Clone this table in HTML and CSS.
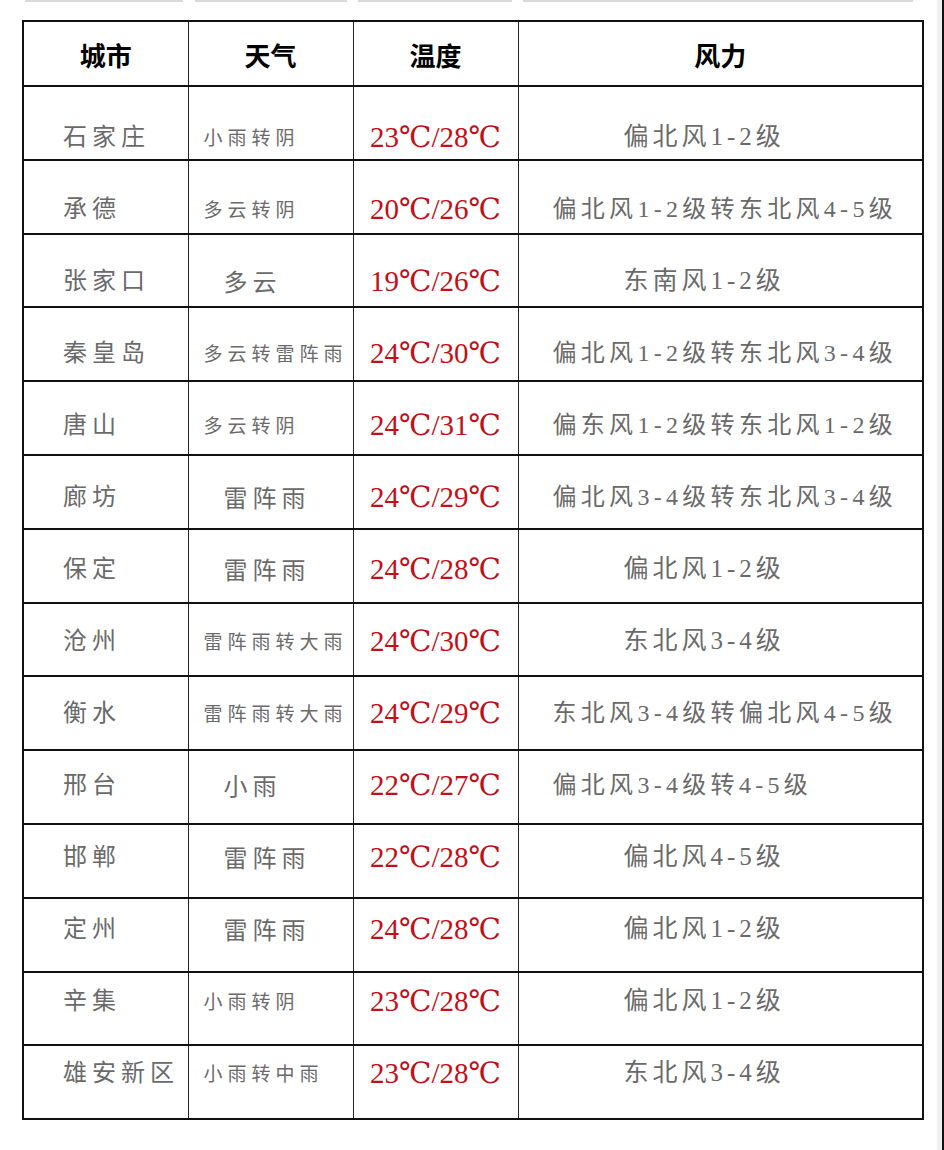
FILE: index.html
```html
<!DOCTYPE html>
<html lang="zh-CN">
<head>
<meta charset="utf-8">
<title>天气预报</title>
<link rel="stylesheet" href="styles.css">
</head>
<body>
<div class="page">
  <div class="main">
    <div class="topbars">
      <span class="bar b1"></span><span class="bar b2"></span><span class="bar b3"></span><span class="bar b4"></span>
    </div>
    <table class="weather">
      <colgroup>
        <col class="c-city"><col class="c-wx"><col class="c-temp"><col class="c-wind">
      </colgroup>
      <thead>
        <tr><th>城市</th><th>天气</th><th>温度</th><th>风力</th></tr>
      </thead>
      <tbody>
        <tr><td class="city">石家庄</td><td class="wx sm">小雨转阴</td><td class="temp">23℃/28℃</td><td class="wind sh">偏北风1-2级</td></tr>
        <tr><td class="city">承德</td><td class="wx sm">多云转阴</td><td class="temp">20℃/26℃</td><td class="wind lg">偏北风1-2级转东北风4-5级</td></tr>
        <tr><td class="city">张家口</td><td class="wx big">多云</td><td class="temp">19℃/26℃</td><td class="wind sh">东南风1-2级</td></tr>
        <tr><td class="city">秦皇岛</td><td class="wx sm">多云转雷阵雨</td><td class="temp">24℃/30℃</td><td class="wind lg">偏北风1-2级转东北风3-4级</td></tr>
        <tr><td class="city">唐山</td><td class="wx sm">多云转阴</td><td class="temp">24℃/31℃</td><td class="wind lg">偏东风1-2级转东北风1-2级</td></tr>
        <tr><td class="city">廊坊</td><td class="wx big">雷阵雨</td><td class="temp">24℃/29℃</td><td class="wind lg">偏北风3-4级转东北风3-4级</td></tr>
        <tr><td class="city">保定</td><td class="wx big">雷阵雨</td><td class="temp">24℃/28℃</td><td class="wind sh">偏北风1-2级</td></tr>
        <tr><td class="city">沧州</td><td class="wx sm">雷阵雨转大雨</td><td class="temp">24℃/30℃</td><td class="wind sh">东北风3-4级</td></tr>
        <tr><td class="city">衡水</td><td class="wx sm">雷阵雨转大雨</td><td class="temp">24℃/29℃</td><td class="wind lg">东北风3-4级转偏北风4-5级</td></tr>
        <tr><td class="city">邢台</td><td class="wx big">小雨</td><td class="temp">22℃/27℃</td><td class="wind lg">偏北风3-4级转4-5级</td></tr>
        <tr><td class="city">邯郸</td><td class="wx big">雷阵雨</td><td class="temp">22℃/28℃</td><td class="wind sh">偏北风4-5级</td></tr>
        <tr><td class="city">定州</td><td class="wx big">雷阵雨</td><td class="temp">24℃/28℃</td><td class="wind sh">偏北风1-2级</td></tr>
        <tr><td class="city">辛集</td><td class="wx sm">小雨转阴</td><td class="temp">23℃/28℃</td><td class="wind sh">偏北风1-2级</td></tr>
        <tr><td class="city">雄安新区</td><td class="wx sm">小雨转中雨</td><td class="temp">23℃/28℃</td><td class="wind sh">东北风3-4级</td></tr>
      </tbody>
    </table>
  </div>
  <div class="edge"></div>
  <div class="edge-dark"></div>
</div>
</body>
</html>
```

FILE: styles.css
```css
html, body {
  margin: 0;
  padding: 0;
  background: #ffffff;
}

.page {
  display: flex;
  width: 944px;
  height: 1150px;
  overflow: hidden;
}

.main {
  flex: 1;
  padding-left: 22px;
}

.edge {
  width: 5px;
  background: #f1f1f1;
}

.edge-dark {
  width: 2px;
  background: #111111;
}

.topbars {
  display: flex;
  height: 2px;
  margin-left: 3px;
  margin-bottom: 18px;
}

.bar {
  display: block;
  height: 2px;
  background: #d9d9d9;
}
.b1 { width: 158px; margin-right: 12px; }
.b2 { width: 152px; margin-right: 11px; }
.b3 { width: 154px; margin-right: 11px; }
.b4 { width: 390px; }

.weather {
  width: 900px;
  table-layout: fixed;
  border-collapse: collapse;
  border: 2px solid #111;
}

.c-city, .c-wx, .c-temp { width: 165px; }
.c-wind { width: 405px; }

.weather th,
.weather td {
  border-left: 1px solid #222;
  border-right: 1px solid #222;
  border-top: 2px solid #111;
  border-bottom: 2px solid #111;
  padding: 0;
  white-space: nowrap;
  overflow: hidden;
}

.weather thead tr { height: 65px; }

.weather th {
  font-family: "Noto Sans CJK SC", sans-serif;
  font-weight: 700;
  font-size: 26px;
  color: #000;
  text-align: center;
  vertical-align: middle;
  padding-top: 1px;
}

.weather tbody tr {
  height: 73.8px;
  --k: 0;
}

.weather tbody tr:nth-child(2) { --k: 1; }
.weather tbody tr:nth-child(3) { --k: 2; }
.weather tbody tr:nth-child(4) { --k: 3; }
.weather tbody tr:nth-child(5) { --k: 4; }
.weather tbody tr:nth-child(6) { --k: 5; }
.weather tbody tr:nth-child(7) { --k: 6; }
.weather tbody tr:nth-child(8) { --k: 7; }
.weather tbody tr:nth-child(9) { --k: 8; }
.weather tbody tr:nth-child(10) { --k: 9; }
.weather tbody tr:nth-child(11) { --k: 10; }
.weather tbody tr:nth-child(12) { --k: 11; }
.weather tbody tr:nth-child(13) { --k: 12; }
.weather tbody tr:nth-child(14) { --k: 13; }

.weather td {
  vertical-align: top;
  line-height: 30px;
  padding-top: calc(35px - var(--k) * 1.8px);
  color: #6a6a6a;
  font-family: "Liberation Serif", "DejaVu Serif", "Noto Sans CJK SC", serif;
}

.weather td.city {
  font-family: "Noto Sans CJK SC", sans-serif;
  font-size: 24px;
  letter-spacing: 5px;
  padding-left: 39px;
  padding-top: calc(33px - var(--k) * 1.8px);
}

.weather td.wx {
  font-family: "Noto Sans CJK SC", sans-serif;
}

.weather td.wx.sm {
  font-size: 19px;
  letter-spacing: 5px;
  padding-left: 15px;
}

.weather td.wx.big {
  font-size: 24px;
  letter-spacing: 5px;
  padding-left: 35px;
}

.weather td.temp {
  text-align: center;
  font-size: 29px;
  color: #c01018;
}

.weather td.wind {
  font-family: "Liberation Serif", "Noto Sans CJK SC", serif;
}

.weather td.wind.sh {
  font-size: 25px;
  letter-spacing: 4px;
  padding-left: 105px;
}

.weather td.wind.lg {
  font-size: 24px;
  letter-spacing: 4.3px;
  padding-left: 34px;
}
```
